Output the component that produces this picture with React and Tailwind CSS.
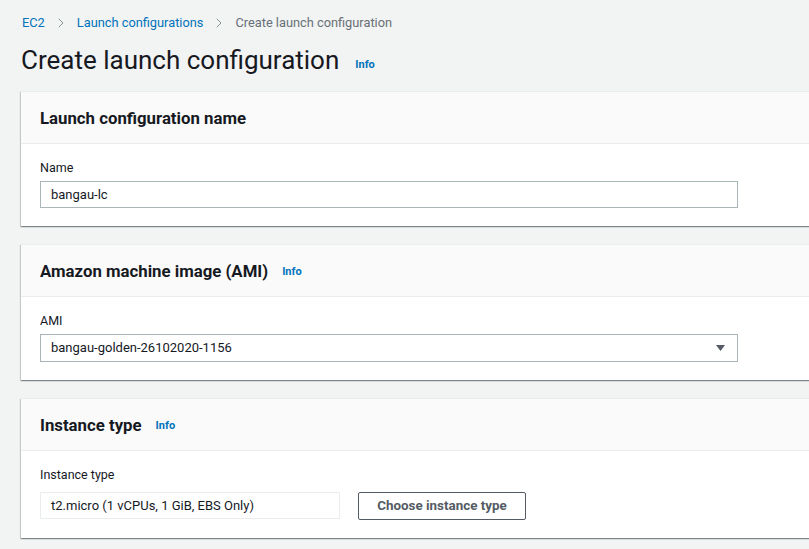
import { ChevronRight } from "lucide-react";

const FONT = { fontFamily: 'Roboto, "Noto Sans", Arial, sans-serif' };

function Info({ className = "" }) {
  return <span className={`text-[11px] font-bold text-[#0073bb] ${className}`}>Info</span>;
}

function Card({ title, info, children }) {
  return (
    <section className="border-t border-[#eaeded] bg-white shadow-[0_1px_1px_0_rgba(0,28,36,0.3),1px_1px_1px_0_rgba(0,28,36,0.15),-1px_1px_1px_0_rgba(0,28,36,0.15)]">
      <header className="flex h-[52px] items-center gap-[14px] border-b border-[#eaeded] bg-[#fafafa] px-[19px]">
        <h2 className="text-[16.8px] font-bold leading-[22px] text-[#16191f]">{title}</h2>
        {info && <Info className="mt-[4px]" />}
      </header>
      <div className="px-[19px] pt-[14px] pb-[18px]">{children}</div>
    </section>
  );
}

function Label({ children }) {
  return <p className="mb-[3px] text-[12.5px] leading-[20px] text-[#16191f]">{children}</p>;
}

export default function App() {
  return (
    <div className="h-[549px] w-[809px] overflow-hidden bg-[#f2f3f3] pl-[21px] text-[#16191f]" style={FONT}>
      <nav className="mt-[13px] flex h-[20px] items-center text-[12.8px]">
        <span className="pl-[1px] text-[#0073bb]">EC2</span>
        <ChevronRight className="mx-[8px] text-[#879596]" size={16} strokeWidth={1.5} />
        <span className="text-[#0073bb]">Launch configurations</span>
        <ChevronRight className="mx-[8px] text-[#879596]" size={16} strokeWidth={1.5} />
        <span className="text-[#687078]">Create launch configuration</span>
      </nav>

      <div className="mt-[9px] flex h-[36px] items-center gap-[16px]">
        <h1 className="text-[26px] font-normal leading-[36px] text-[#16191f]">Create launch configuration</h1>
        <Info className="mt-[10px]" />
      </div>

      <div className="mt-[13px] flex w-[820px] flex-col gap-[18px]">
        <Card title="Launch configuration name">
          <Label>Name</Label>
          <div className="flex h-[27px] w-[698px] items-center border border-[#aab7b8] px-[10px] text-[13px]">
            bangau-lc
          </div>
        </Card>

        <Card title="Amazon machine image (AMI)" info>
          <Label>AMI</Label>
          <div className="flex h-[28px] w-[698px] items-center justify-between border border-[#aab7b8] pl-[10px] pr-[12px] text-[13px]">
            <span>bangau-golden-26102020-1156</span>
            <svg width="9" height="6" viewBox="0 0 9 6">
              <path d="M0 0 L9 0 L4.5 6 Z" fill="#545b64" />
            </svg>
          </div>
        </Card>

        <Card title="Instance type" info>
          <Label>Instance type</Label>
          <div className="mt-[7px] flex items-start gap-[18px]">
            <div className="flex h-[27px] w-[300px] items-center border border-[#eaeded] px-[10px] text-[13px]">
              t2.micro (1 vCPUs, 1 GiB, EBS Only)
            </div>
            <button className="h-[28px] w-[168px] rounded-[2px] border border-[#545b64] bg-white text-[13.4px] font-bold text-[#545b64]">
              Choose instance type
            </button>
          </div>
        </Card>
      </div>
    </div>
  );
}
